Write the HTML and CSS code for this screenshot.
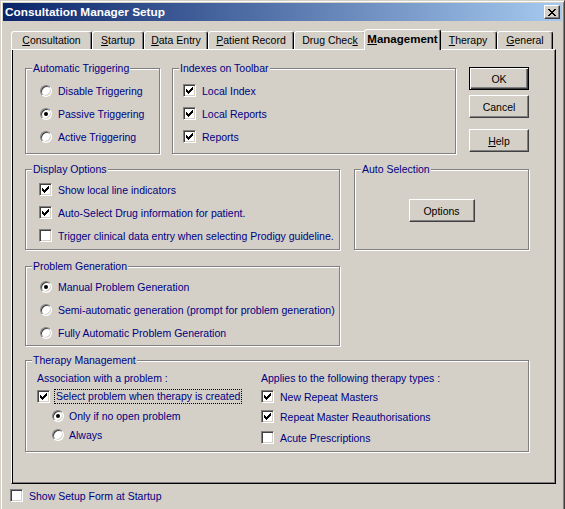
FILE: index.html
```html
<!DOCTYPE html>
<html>
<head>
<meta charset="utf-8">
<title>Consultation Manager Setup</title>
<link rel="stylesheet" href="styles.css">
</head>
<body>
<div class="window">
  <div class="titlebar">
    <span class="title">Consultation Manager Setup</span>
    <span class="close"><svg width="8" height="7" viewBox="0 0 8 7"><path d="M0 0h2v1H0zM6 0h2v1H6zM1 1h2v1H1zM5 1h2v1H5zM2 2h4v1H2zM3 3h2v1H3zM2 4h4v1H2zM1 5h2v1H1zM5 5h2v1H5zM0 6h2v1H0zM6 6h2v1H6z"/></svg></span>
  </div>

  <div class="tabs">
    <div class="tab t1"><u>C</u>onsultation</div>
    <div class="tab t2"><u>S</u>tartup</div>
    <div class="tab t3"><u>D</u>ata Entry</div>
    <div class="tab t4"><u>P</u>atient Record</div>
    <div class="tab t5">Drug Chec<u>k</u></div>
    <div class="tab t6 active"><u>M</u>anagement</div>
    <div class="tab t7"><u>T</u>herapy</div>
    <div class="tab t8"><u>G</u>eneral</div>
  </div>

  <div class="panel">
    <div class="row row1">
      <div class="group g-trig">
        <div class="gtitle">Automatic Triggering</div>
        <div class="list list-trig">
          <div class="opt"><span class="radio"></span><span>Disable Triggering</span></div>
          <div class="opt"><span class="radio"><i></i></span><span>Passive Triggering</span></div>
          <div class="opt"><span class="radio"></span><span>Active Triggering</span></div>
        </div>
      </div>
      <div class="group g-idx">
        <div class="gtitle">Indexes on Toolbar</div>
        <div class="list list-idx">
          <div class="opt"><span class="box"><svg width="7" height="7" viewBox="0 0 7 7"><path d="M0 2h1v3H0zM1 3h1v3H1zM2 4h1v3H2zM3 3h1v3H3zM4 2h1v3H4zM5 1h1v3H5zM6 0h1v3H6z"/></svg></span><span>Local Index</span></div>
          <div class="opt"><span class="box"><svg width="7" height="7" viewBox="0 0 7 7"><path d="M0 2h1v3H0zM1 3h1v3H1zM2 4h1v3H2zM3 3h1v3H3zM4 2h1v3H4zM5 1h1v3H5zM6 0h1v3H6z"/></svg></span><span>Local Reports</span></div>
          <div class="opt"><span class="box"><svg width="7" height="7" viewBox="0 0 7 7"><path d="M0 2h1v3H0zM1 3h1v3H1zM2 4h1v3H2zM3 3h1v3H3zM4 2h1v3H4zM5 1h1v3H5zM6 0h1v3H6z"/></svg></span><span>Reports</span></div>
        </div>
      </div>
      <div class="buttons">
        <div class="btn default">OK</div>
        <div class="btn cancel">Cancel</div>
        <div class="btn help"><span><u>H</u>elp</span></div>
      </div>
    </div>

    <div class="row row2">
      <div class="group g-disp">
        <div class="gtitle">Display Options</div>
        <div class="list list-disp">
          <div class="opt"><span class="box"><svg width="7" height="7" viewBox="0 0 7 7"><path d="M0 2h1v3H0zM1 3h1v3H1zM2 4h1v3H2zM3 3h1v3H3zM4 2h1v3H4zM5 1h1v3H5zM6 0h1v3H6z"/></svg></span><span>Show local line indicators</span></div>
          <div class="opt"><span class="box"><svg width="7" height="7" viewBox="0 0 7 7"><path d="M0 2h1v3H0zM1 3h1v3H1zM2 4h1v3H2zM3 3h1v3H3zM4 2h1v3H4zM5 1h1v3H5zM6 0h1v3H6z"/></svg></span><span>Auto-Select Drug information for patient.</span></div>
          <div class="opt"><span class="box"></span><span>Trigger clinical data entry when selecting Prodigy guideline.</span></div>
        </div>
      </div>
      <div class="group g-auto">
        <div class="gtitle">Auto Selection</div>
        <div class="auto-body">
          <div class="btn options">Options</div>
        </div>
      </div>
    </div>

    <div class="row row3">
      <div class="group g-prob">
        <div class="gtitle">Problem Generation</div>
        <div class="list list-prob">
          <div class="opt"><span class="radio"><i></i></span><span>Manual Problem Generation</span></div>
          <div class="opt"><span class="radio"></span><span>Semi-automatic generation (prompt for problem generation)</span></div>
          <div class="opt"><span class="radio"></span><span>Fully Automatic Problem Generation</span></div>
        </div>
      </div>
    </div>

    <div class="row row4">
      <div class="group g-ther">
        <div class="gtitle">Therapy Management</div>
        <div class="tgrid">
          <div class="tcol">
            <div class="opt h18">Association with a problem :</div>
            <div class="opt h19"><span class="box tbox"><svg width="7" height="7" viewBox="0 0 7 7"><path d="M0 2h1v3H0zM1 3h1v3H1zM2 4h1v3H2zM3 3h1v3H3zM4 2h1v3H4zM5 1h1v3H5zM6 0h1v3H6z"/></svg></span><span class="focus">Select problem when therapy is created</span></div>
            <div class="opt h19 indent"><span class="radio tr"><i></i></span><span>Only if no open problem</span></div>
            <div class="opt h19 indent"><span class="radio tr"></span><span>Always</span></div>
          </div>
          <div class="tcol">
            <div class="opt h18">Applies to the following therapy types :</div>
            <div class="opt h19"><span class="box"><svg width="7" height="7" viewBox="0 0 7 7"><path d="M0 2h1v3H0zM1 3h1v3H1zM2 4h1v3H2zM3 3h1v3H3zM4 2h1v3H4zM5 1h1v3H5zM6 0h1v3H6z"/></svg></span><span>New Repeat Masters</span></div>
            <div class="opt h21"><span class="box"><svg width="7" height="7" viewBox="0 0 7 7"><path d="M0 2h1v3H0zM1 3h1v3H1zM2 4h1v3H2zM3 3h1v3H3zM4 2h1v3H4zM5 1h1v3H5zM6 0h1v3H6z"/></svg></span><span>Repeat Master Reauthorisations</span></div>
            <div class="opt h21"><span class="box"></span><span>Acute Prescriptions</span></div>
          </div>
        </div>
      </div>
    </div>
  </div>

  <div class="opt footer"><span class="box fbox"></span><span>Show Setup Form at Startup</span></div>
</div>
</body>
</html>
```

FILE: styles.css
```css
html, body {
  margin: 0;
  padding: 0;
  background: #d4d0c8;
  overflow: hidden;
}

body {
  font-family: "Liberation Sans", Arial, sans-serif;
  font-size: 10.5px;
  color: #000;
}

.window {
  width: 565px;
  height: 514px;
  box-sizing: border-box;
  border: 1px solid;
  border-color: #d4d0c8 #404040 #404040 #d4d0c8;
  box-shadow: inset 1px 1px 0 #fff, inset -1px -1px 0 #808080;
  padding: 2px;
  background: #d4d0c8;
}

/* ---------- title bar ---------- */
.titlebar {
  height: 18px;
  display: flex;
  align-items: center;
  justify-content: space-between;
  padding: 0 2px;
  background: linear-gradient(to right, #0a246a, #a6caf0);
}

.title {
  color: #fff;
  font-weight: bold;
  font-size: 11.8px;
  white-space: nowrap;
}

.close {
  width: 16px;
  height: 14px;
  box-sizing: border-box;
  border: 1px solid;
  border-color: #fff #404040 #404040 #fff;
  box-shadow: inset -1px -1px 0 #808080;
  background: #d4d0c8;
  display: flex;
  align-items: center;
  justify-content: center;
}

.close svg {
  display: block;
  fill: #000;
}

/* ---------- tabs ---------- */
.tabs {
  display: flex;
  align-items: flex-end;
  height: 20px;
  margin: 8px 0 0 8px;
}

.tab {
  box-sizing: border-box;
  height: 18px;
  border: 1px solid;
  border-bottom: none;
  border-color: #fff #000 transparent #fff;
  border-radius: 3px 3px 0 0;
  box-shadow: inset -1px 0 0 #808080;
  display: flex;
  align-items: center;
  justify-content: center;
  white-space: nowrap;
  background: #d4d0c8;
  flex: none;
  padding-bottom: 2px;
}

.t1 { width: 81px; }
.t2 { width: 52px; }
.t3 { width: 64px; }
.t4 { width: 86px; }
.t5 { width: 72px; }
.t6 { width: 77px; }
.t7 { width: 58px; }
.t8 { width: 56px; }

.tab.active {
  height: 21px;
  margin: 0 -2px -1px;
  font-weight: bold;
  font-size: 11.5px;
  position: relative;
  z-index: 1;
  padding-bottom: 3px;
}

/* ---------- panel ---------- */
.panel {
  margin-left: 8px;
  width: 545px;
  height: 435px;
  box-sizing: border-box;
  border: 1px solid;
  border-color: #fff #000 #000 #fff;
  box-shadow: inset 1px 0 0 #000, inset -1px -1px 0 #808080;
  padding: 18px 0 0 13px;
}

.row {
  display: flex;
  align-items: flex-start;
}

.row2 { margin-top: 15px; }
.row3 { margin-top: 16px; }
.row4 { margin-top: 14px; }

/* ---------- group boxes ---------- */
.group {
  box-sizing: border-box;
  border: 1px solid #808080;
  box-shadow: 1px 1px 0 #fff, inset 1px 1px 0 #fff;
  flex: none;
}

.gtitle {
  width: max-content;
  margin: -7px 0 -6px 6px;
  padding: 0 1px;
  line-height: 13px;
  background: #d4d0c8;
  color: #000080;
  white-space: nowrap;
}

.g-trig { width: 135px; height: 86px; }
.g-idx { width: 284px; height: 86px; margin-left: 12px; }
.g-disp { width: 315px; height: 81px; }
.g-auto { width: 175px; height: 81px; margin-left: 14px; }
.g-prob { width: 315px; height: 80px; }
.g-ther { width: 504px; height: 92px; }

.list-trig { padding: 10px 0 0 14px; }
.list-idx { padding: 10px 0 0 10px; }
.list-disp { padding: 8px 0 0 13px; }
.list-prob { padding: 8px 0 0 14px; }

.opt {
  display: flex;
  align-items: center;
  height: 23px;
  color: #000080;
  white-space: nowrap;
}

/* ---------- check boxes & radios ---------- */
.box {
  width: 13px;
  height: 13px;
  box-sizing: border-box;
  border: 1px solid;
  border-color: #808080 #fff #fff #808080;
  box-shadow: inset 1px 1px 0 #404040, inset -1px -1px 0 #d4d0c8;
  background: #fff;
  margin-right: 6px;
  flex: none;
  display: flex;
  align-items: center;
  justify-content: center;
}

.box svg {
  display: block;
  fill: #000;
}

.radio {
  width: 12px;
  height: 12px;
  box-sizing: border-box;
  border-radius: 50%;
  border: 1px solid;
  border-color: #808080 #fff #fff #808080;
  box-shadow: inset 1px 1px 0 #404040, inset -1px -1px 0 #d4d0c8;
  background: #fff;
  margin-right: 6px;
  flex: none;
  display: flex;
  align-items: center;
  justify-content: center;
}

.radio i {
  display: block;
  width: 4px;
  height: 4px;
  border-radius: 50%;
  background: #000;
}

/* ---------- buttons ---------- */
.buttons {
  display: flex;
  flex-direction: column;
  margin: -1px 0 0 13px;
}

.btn {
  width: 60px;
  height: 23px;
  box-sizing: border-box;
  border: 1px solid;
  border-color: #fff #404040 #404040 #fff;
  box-shadow: inset -1px -1px 0 #808080;
  display: flex;
  align-items: center;
  justify-content: center;
  color: #000;
  white-space: nowrap;
}

.btn.default {
  border-color: #000;
  box-shadow: inset 1px 1px 0 #fff, inset -1px -1px 0 #404040, inset -2px -2px 0 #808080;
}

.btn.cancel { margin-top: 5px; }
.btn.help { margin-top: 11px; }

.auto-body {
  display: flex;
  justify-content: center;
  padding-top: 29px;
}

.btn.options { width: 66px; }

/* ---------- therapy ---------- */
.tgrid {
  display: grid;
  grid-template-columns: 224px 1fr;
  padding: 8px 0 0 11px;
}

.tcol {
  display: flex;
  flex-direction: column;
}

.h18 { height: 18px; }
.h19 { height: 19px; }
.h21 { height: 21px; }

.indent { padding-left: 15px; }

.tbox { margin-right: 4px; }
.radio.tr { margin-right: 5px; }

.focus {
  border: 1px dotted #000;
  padding: 0 1px;
  line-height: 13px;
}

/* ---------- footer ---------- */
.footer {
  height: 13px;
  margin: 5px 0 0 7px;
}

.fbox { margin-right: 6px; }
```
